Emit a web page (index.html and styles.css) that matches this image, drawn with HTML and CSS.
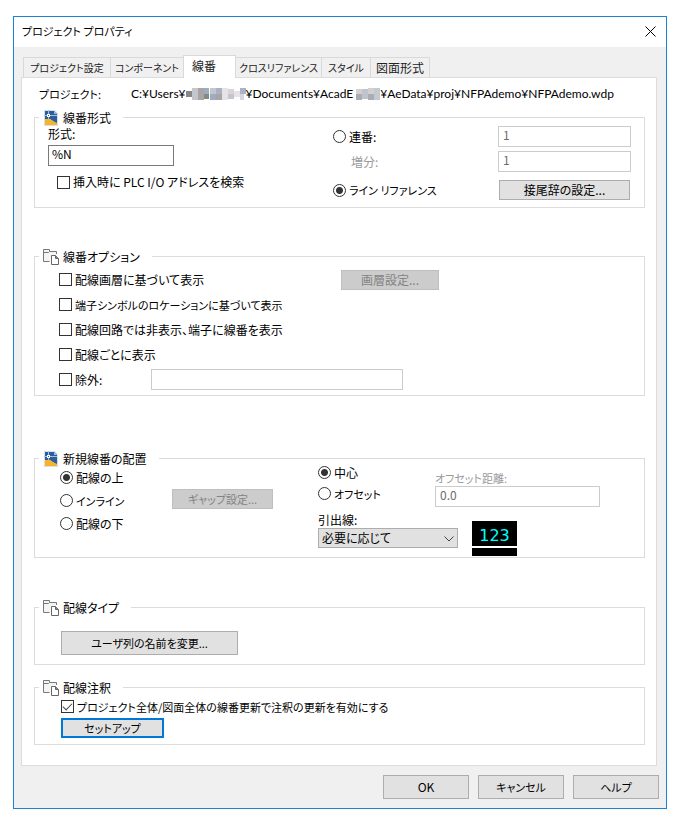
FILE: index.html
```
<!DOCTYPE html>
<html lang="ja">
<head>
    <meta charset="UTF-8">
    <meta name="viewport" content="width=device-width, initial-scale=1.0">
    <title>プロジェクト プロパティ</title>
    <link rel="stylesheet" href="styles.css">
</head>
<body>

<!-- shared icons -->
<svg class="symbols" aria-hidden="true">
    <symbol id="icon-drawing" viewBox="0 0 14 16">
        <path d="M0 0H11L14 3V16H0Z" fill="#d5e0ec"/>
        <path d="M1 1H10L13 4V14L6 9H1Z" fill="#2a5d9f"/>
        <path d="M1 9H5L13 13V15H1Z" fill="#f6b426"/>
        <path d="M0 5.5H13M4.500 0V9" stroke="#a9c0dc" fill="none"/>
        <rect x="3.500" y="4.500" width="2" height="2" fill="#2a5d9f" stroke="#fff"/>
        <path d="M10 1L13 4H10Z" fill="#9dbbdc"/>
    </symbol>
    <symbol id="icon-project" viewBox="0 0 16 16">
        <path d="M0.500 12.500V0.500H6.500L7.500 2.500H13.500V5.500H9.500L7.500 7.500V12.500Z" fill="#f4f4f4"/>
        <path d="M6.500 12.500H0.500V0.500H6.500V2.500H13.500V5M0.500 3.500H5.500L6.500 2.500" fill="none" stroke="#777"/>
        <path d="M8.500 6.500H12.500L15.500 9.500V15.500H8.500Z" fill="#fff" stroke="#666"/>
        <path d="M12.500 6.500V9.500H15.500" fill="#888" stroke="#666"/>
    </symbol>
</svg>

<div class="dialog">
    <header class="titlebar">
        <h1>プロジェクト プロパティ</h1>
        <button class="close" type="button" aria-label="閉じる">
            <svg width="11" height="11" viewBox="0 0 11 11"><path d="M0.500 0.500L10.500 10.500M10.500 0.500L0.500 10.500" stroke="#000" fill="none"/></svg>
        </button>
    </header>

    <nav class="tabs">
        <a href="#project">プロジェクト設定</a>
        <a href="#component">コンポーネント</a>
        <a href="#wire" class="active">線番</a>
        <a href="#xref">クロスリファレンス</a>
        <a href="#style">スタイル</a>
        <a href="#format" class="kanji">図面形式</a>
    </nav>

    <main class="panel" id="wire">
        <div class="path">
            <span class="path-label kana">プロジェクト:</span>
            <span class="path-value">C:¥Users¥<svg width="60" height="12" viewBox="0 0 60 12"><path d="M0 3h6v6H0zM18 6h5v5h-5z" fill="#888"/><path d="M6 0h6v12H6zM24 0h6v6h-6zM42 6h6v5h-6z" fill="#c4c6ce"/><path d="M12 0h6v12h-6zM30 6h6v6h-6z" fill="#aaa5a4"/><path d="M18 0h5v6h-5zM24 6h6v6h-6z" fill="#9badc0"/><path d="M30 0h6v6h-6zM54 0h6v6h-6z" fill="#a9b3c4"/><path d="M36 0h6v12h-6zM48 3h6v6h-6z" fill="#e6e2e5"/><path d="M42 1h6v5h-6zM54 6h4v6h-4z" fill="#d6d4dc"/></svg>¥Documents¥AcadE <svg width="24" height="12" viewBox="0 0 24 12"><path d="M0 1h6v5H0zM12 0h6v6h-6z" fill="#d3d0cd"/><path d="M0 6h6v6H0zM12 6h6v6h-6z" fill="#a9adb6"/><path d="M6 1h6v10H6z" fill="#bfc3cb"/><path d="M18 0h6v12h-6z" fill="#c3cbd0"/></svg>¥AeData¥proj¥NFPAdemo¥NFPAdemo.wdp</span>
        </div>

        <fieldset class="group">
            <legend><svg class="icon"><use href="#icon-drawing"/></svg>線番形式</legend>
            <div class="format-grid">
                <div class="format-left">
                    <label for="format">形式:</label>
                    <input type="text" id="format" class="strong" value="%N">
                    <label class="check"><input type="checkbox">挿入時に PLC I/O アドレスを検索</label>
                </div>
                <label class="check"><input type="radio" name="mode">連番:</label>
                <input type="text" aria-label="連番" value="1" disabled>
                <label class="off indent" for="step">増分:</label>
                <input type="text" id="step" value="1" disabled>
                <label class="check kana"><input type="radio" name="mode" checked>ライン リファレンス</label>
                <button type="button">接尾辞の設定...</button>
            </div>
        </fieldset>

        <fieldset class="group options">
            <legend><svg class="icon"><use href="#icon-project"/></svg>線番オプション</legend>
            <div class="option-list">
                <div class="row">
                    <label class="check layer"><input type="checkbox">配線画層に基づいて表示</label>
                    <button type="button" disabled>画層設定...</button>
                </div>
                <div class="row">
                    <label class="check kana"><input type="checkbox">端子シンボルのロケーションに基づいて表示</label>
                </div>
                <div class="row">
                    <label class="check"><input type="checkbox">配線回路では非表示、端子に線番を表示</label>
                </div>
                <div class="row">
                    <label class="check"><input type="checkbox">配線ごとに表示</label>
                </div>
                <div class="row">
                    <label class="check exclude"><input type="checkbox">除外:</label>
                    <input type="text" aria-label="除外" disabled>
                </div>
            </div>
        </fieldset>

        <fieldset class="group placement">
            <legend><svg class="icon"><use href="#icon-drawing"/></svg>新規線番の配置</legend>
            <div class="placement-grid">
                <div class="position">
                    <label class="check"><input type="radio" name="position" checked>配線の上</label>
                    <label class="check kana"><input type="radio" name="position">インライン</label>
                    <label class="check"><input type="radio" name="position">配線の下</label>
                </div>
                <div class="gap">
                    <button type="button" class="kana" disabled>ギャップ設定...</button>
                </div>
                <div>
                    <div class="offset">
                        <div class="align">
                            <label class="check"><input type="radio" name="align" checked>中心</label>
                            <label class="check kana"><input type="radio" name="align">オフセット</label>
                        </div>
                        <div class="distance">
                            <label class="off kana" for="distance">オフセット距離:</label>
                            <input type="text" id="distance" value="0.0" disabled>
                        </div>
                    </div>
                    <div class="leader">
                        <div class="leader-field">
                            <label for="leader">引出線:</label>
                            <div class="select">
                                <select id="leader">
                                    <option>必要に応じて</option>
                                </select>
                                <svg width="10" height="6" viewBox="0 0 10 6"><path d="M0.500 0.500L5 5L9.500 0.500" stroke="#444" fill="none"/></svg>
                            </div>
                        </div>
                        <div class="preview">123</div>
                    </div>
                </div>
            </div>
        </fieldset>

        <fieldset class="group types">
            <legend><svg class="icon"><use href="#icon-project"/></svg>配線タイプ</legend>
            <div class="types-body">
                <button type="button" class="kana">ユーザ列の名前を変更...</button>
            </div>
        </fieldset>

        <fieldset class="group notes">
            <legend><svg class="icon"><use href="#icon-project"/></svg>配線注釈</legend>
            <div class="notes-body">
                <label class="check kana"><input type="checkbox" checked>プロジェクト全体/図面全体の線番更新で注釈の更新を有効にする</label>
                <button type="button" class="default kana">セットアップ</button>
            </div>
        </fieldset>
    </main>

    <footer class="actions">
        <button type="button">OK</button>
        <button type="button" class="kana">キャンセル</button>
        <button type="button" class="kana">ヘルプ</button>
    </footer>
</div>

</body>
</html>
```
FILE: styles.css
```
* {
    box-sizing: border-box;
}

body {
    margin: 0;
    padding: 16px 13px;
    background: #fff;
    color: #000;
    font-family: "Noto Sans CJK JP", sans-serif;
    font-size: 12px;
    line-height: 16px;
    font-feature-settings: "palt";
}

button, input, select {
    margin: 0;
    font: inherit;
    font-feature-settings: inherit;
    color: inherit;
}

.symbols {
    display: none;
}

/* labels that are mostly kana */
.kana {
    font-size: 11px;
}

.dialog {
    background: #f0f0f0;
    border: 1px solid #1883d7;
}

.titlebar {
    display: flex;
    align-items: center;
    justify-content: space-between;
    height: 30px;
    padding: 0 10px 2px 8px;
    background: #fff;
}

.titlebar h1 {
    margin: 0;
    font-size: 11px;
    font-weight: normal;
}

.close {
    display: flex;
    padding: 0;
    border: none;
    background: none;
}

/* tabs */
.tabs {
    display: grid;
    grid-template-columns: 88px 73px 52px 86px 49px 59px;
    align-items: end;
    padding: 8px 9px 0;
}

.tabs a {
    height: 20px;
    border: 1px solid #d9d9d9;
    border-width: 1px 1px 0 0;
    color: #222;
    font-size: 10px;
    line-height: 20px;
    text-align: center;
    text-decoration: none;
    white-space: nowrap;
}

.tabs a:first-child {
    border-left-width: 1px;
}

.tabs .kanji {
    font-size: 12px;
}

.tabs .active {
    position: relative;
    height: 23px;
    margin: 0 0 -1px -1px;
    padding-left: 8px;
    border-left-width: 1px;
    background: #fff;
    font-size: 12px;
    text-align: left;
}

.panel {
    margin: 0 9px 0 7px;
    padding: 0 11px 20px 12px;
    background: #fff;
    border: 1px solid #dcdcdc;
}

.path {
    display: flex;
    align-items: center;
    height: 32px;
    padding-left: 5px;
    white-space: nowrap;
}

.path-label {
    width: 92px;
}

.path-value {
    font-family: Lato, "Noto Sans", sans-serif;
}

.path-value svg {
    vertical-align: -2px;
}

/* groups */
.group {
    min-width: 0;
    margin: 0;
    padding: 0;
    border: 1px solid #dcdcdc;
}

.group legend {
    display: flex;
    align-items: center;
    height: 15px;
    margin-left: 4px;
    padding: 0 12px 0 4px;
}

.icon {
    flex: none;
    width: 16px;
    height: 16px;
    margin-right: 4px;
}

.check {
    display: flex;
    align-items: center;
    gap: 3px;
    white-space: nowrap;
}

.off {
    color: #9a9a9a;
}

.indent {
    padding-left: 18px;
}

input[type="checkbox"],
input[type="radio"] {
    appearance: none;
    flex: none;
    width: 13px;
    height: 13px;
    border: 1px solid #333;
    background: #fff;
}

input[type="radio"] {
    border-radius: 50%;
}

input[type="radio"]:checked {
    background: radial-gradient(circle, #333 3px, #fff 4px);
}

input[type="checkbox"]:checked::before {
    content: "";
    display: block;
    width: 8px;
    height: 4px;
    margin: 2px 0 0 1px;
    border: solid #444;
    border-width: 0 0 1px 1px;
    transform: rotate(-45deg);
}

input[type="text"] {
    height: 21px;
    padding: 0 4px 4px;
    border: 1px solid #ccc;
    background: #fff;
}

input[type="text"]:disabled {
    color: #6d6d6d;
}

input.strong {
    border-color: #7a7a7a;
    padding-left: 3px;
}

.group button,
.actions button {
    height: 20px;
    padding: 0;
    border: 1px solid #adadad;
    background: #e1e1e1;
    line-height: 16px;
    white-space: nowrap;
}

.group button:disabled {
    border-color: #bfbfbf;
    background: #ccc;
    color: #838383;
}

.group .default {
    border: 2px solid #0078d7;
}

/* wire number format */
.format-grid {
    display: grid;
    grid-template-columns: 1fr 165px 133px;
    grid-template-rows: 21px 21px 28px;
    row-gap: 4px;
    align-items: center;
    padding: 1px 13px 3px;
}

.format-left {
    display: flex;
    flex-direction: column;
    grid-row: 1 / 4;
    align-self: start;
}

.format-left .strong {
    width: 126px;
    margin: 3px 0 8px;
}

.format-left .check {
    padding-left: 9px;
}

.format-grid > input {
    width: 100%;
}

.format-grid > button {
    margin: 0 1px;
}

/* wire number options */
.options {
    margin-top: 41px;
}

.option-list {
    padding: 3px 24px;
}

.row {
    display: flex;
    align-items: center;
    height: 25px;
}

.layer {
    width: 282px;
}

.options button {
    width: 98px;
}

.exclude {
    width: 92px;
}

.options input[type="text"] {
    width: 252px;
}

/* new wire number placement */
.placement {
    margin-top: 55px;
}

.placement-grid {
    display: grid;
    grid-template-columns: 112px 146px 1fr;
    padding: 0 25px 1px;
}

.position .check {
    height: 23px;
}

.gap {
    align-self: start;
    padding-top: 23px;
}

.gap button {
    display: block;
    width: 101px;
}

.offset {
    display: flex;
    height: 42px;
}

.align {
    width: 117px;
}

.align .check {
    height: 13px;
    margin-bottom: 8px;
}

.distance {
    display: flex;
    flex-direction: column;
    padding-top: 4px;
}

.distance input {
    width: 165px;
}

.leader {
    display: flex;
    align-items: flex-end;
    gap: 14px;
    height: 48px;
}

.leader-field {
    width: 140px;
    padding-bottom: 8px;
}

.select {
    position: relative;
}

.select select {
    display: block;
    appearance: none;
    width: 100%;
    height: 20px;
    padding: 0 3px;
    border: 1px solid #adadad;
    border-radius: 0;
    background: #e1e1e1;
}

.select svg {
    position: absolute;
    right: 4px;
    top: 8px;
}

.preview {
    width: 45px;
    height: 35px;
    border-bottom: 8px solid #000;
    background: linear-gradient(#000 25px, #fff 25px);
    color: #0ff;
    font-family: "DejaVu Sans", sans-serif;
    font-size: 16px;
    line-height: 30px;
    text-align: center;
}

/* wire type and wire notes */
.types {
    margin-top: 42px;
}

.types-body {
    padding: 16px 26px 9px;
}

.types button {
    display: block;
    width: 177px;
    height: 24px;
}

.notes {
    margin-top: 15px;
}

.notes-body {
    padding: 0 26px 6px;
}

.notes .check {
    height: 23px;
}

.notes button {
    display: block;
    width: 103px;
}

.actions {
    display: flex;
    justify-content: flex-end;
    gap: 9px;
    padding: 9px 7px 9px 9px;
}

.actions button {
    width: 86px;
    height: 24px;
}
```
